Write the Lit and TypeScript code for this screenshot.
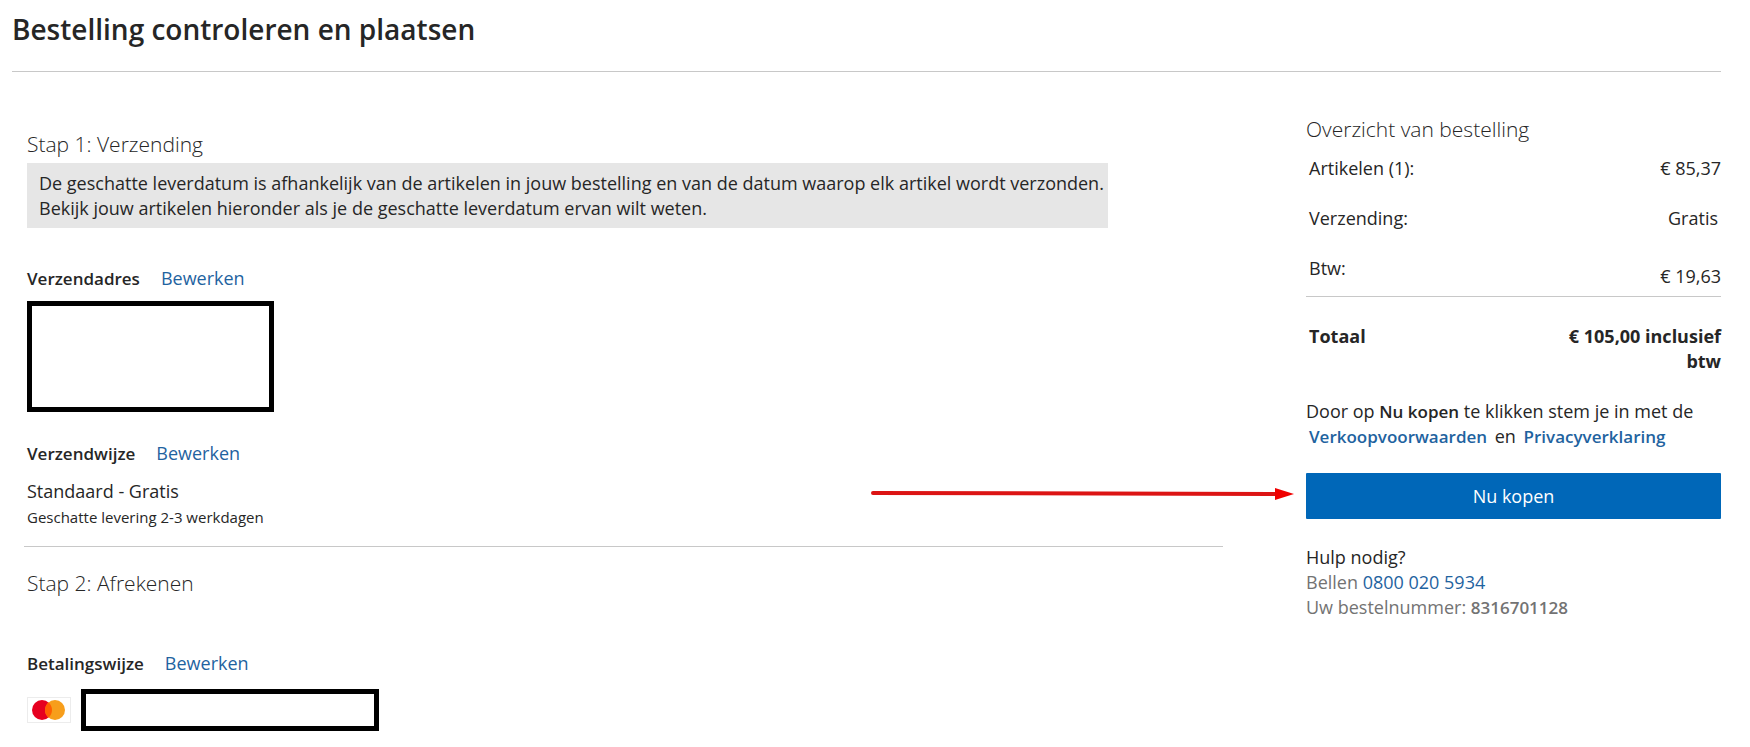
import { LitElement, html, css } from "lit";
import { customElement } from "lit/decorators.js";

@customElement("app-root")
export class AppRoot extends LitElement {
  static styles = css`
    :host {
      display: block;
      box-sizing: border-box;
      padding: 11px 29px 12px 12px;
      background: #fff;
      color: #262626;
      font-family: "Open Sans", "Noto Sans", sans-serif;
      font-size: 18px;
      line-height: 25px;
    }
    *,
    *::before,
    *::after {
      box-sizing: border-box;
    }
    h1,
    h2,
    h3,
    p,
    dl,
    dd {
      margin: 0;
    }
    a {
      color: #1f639f;
      text-decoration: none;
    }
    .title {
      padding-bottom: 24px;
      border-bottom: 1px solid #c8c8c8;
      font-size: 28px;
      line-height: 36px;
      font-weight: 600;
    }
    .layout {
      display: grid;
      grid-template-columns: minmax(0, 1fr) 415px;
      column-gap: 83px;
      padding-left: 12px;
    }
    .step {
      padding: 0 3px;
    }
    .shipping {
      padding-top: 57px;
      padding-bottom: 16px;
    }
    .rule {
      height: 1px;
      margin: 0;
      border: 0;
      background: #c8c8c8;
    }
    .heading {
      font-size: 21px;
      line-height: 30px;
      font-weight: 300;
    }
    .note {
      width: fit-content;
      margin-top: 4px;
      padding: 8px 4px 7px 12px;
      background: #e6e6e6;
    }
    .label-row {
      display: flex;
      align-items: baseline;
      gap: 21px;
    }
    .label {
      font-size: 17px;
      line-height: 25px;
      font-weight: 600;
    }
    .address {
      padding-top: 38px;
    }
    .method {
      padding-top: 29px;
    }
    .redacted {
      border: 5px solid #000;
      background: #fff;
    }
    .address-box {
      width: 247px;
      height: 111px;
      margin-top: 10px;
    }
    .method-name {
      padding-top: 13px;
    }
    .estimate {
      padding-top: 1px;
      font-size: 15px;
    }
    .payment {
      padding-top: 21px;
    }
    .payment-method {
      padding-top: 53px;
    }
    .card-row {
      display: flex;
      align-items: center;
      gap: 10px;
      padding-top: 13px;
    }
    .card-logo {
      display: block;
      width: 44px;
      height: 26px;
    }
    .card-box {
      width: 298px;
      height: 42px;
    }
    .summary {
      padding-top: 42px;
    }
    .line {
      display: flex;
      justify-content: space-between;
      gap: 16px;
      padding: 12px 0 13px 3px;
    }
    .line dd {
      text-align: right;
    }
    .line .free {
      padding-right: 3px;
    }
    .line.tax {
      padding-bottom: 0;
    }
    .tax dd {
      padding: 8px 0 7px;
    }
    .line.total {
      padding: 27px 0 0 3px;
      border-top: 1px solid #c8c8c8;
      font-weight: 700;
    }
    .total dd {
      max-width: 170px;
    }
    .terms {
      padding-top: 25px;
    }
    .terms strong,
    .terms a,
    .order-number {
      font-size: 17px;
      font-weight: 600;
    }
    .terms a {
      margin: 0 3px;
    }
    .buy-row {
      position: relative;
      margin-top: 24px;
    }
    .buy {
      display: block;
      width: 100%;
      padding: 11px 12px 10px;
      border: 0;
      border-radius: 1px;
      background: #0067b8;
      color: #fff;
      font: inherit;
      cursor: pointer;
    }
    .arrow {
      position: absolute;
      right: calc(100% + 11px);
      top: 14px;
      width: 424px;
      height: 14px;
      pointer-events: none;
    }
    .help {
      padding-top: 26px;
    }
    .muted {
      color: #737373;
    }
  `;

  render() {
    return html`
      <main>
        <h1 class="title">Bestelling controleren en plaatsen</h1>
        <div class="layout">
          <div>
            <section class="step shipping">
              <h2 class="heading">Stap 1: Verzending</h2>
              <p class="note">
                De geschatte leverdatum is afhankelijk van de artikelen in jouw bestelling en van de datum waarop elk artikel wordt verzonden.<br />
                Bekijk jouw artikelen hieronder als je de geschatte leverdatum ervan wilt weten.
              </p>
              <div class="address">
                <div class="label-row">
                  <h3 class="label">Verzendadres</h3>
                  <a href="#verzendadres">Bewerken</a>
                </div>
                <div class="redacted address-box"></div>
              </div>
              <div class="method">
                <div class="label-row">
                  <h3 class="label">Verzendwijze</h3>
                  <a href="#verzendwijze">Bewerken</a>
                </div>
                <p class="method-name">Standaard - Gratis</p>
                <p class="estimate">Geschatte levering 2-3 werkdagen</p>
              </div>
            </section>
            <hr class="rule" />
            <section class="step payment">
              <h2 class="heading">Stap 2: Afrekenen</h2>
              <div class="payment-method">
                <div class="label-row">
                  <h3 class="label">Betalingswijze</h3>
                  <a href="#betalingswijze">Bewerken</a>
                </div>
                <div class="card-row">
                  <svg class="card-logo" viewBox="0 0 44 26" aria-hidden="true">
                    <rect x="0.5" y="0.5" width="43" height="25" fill="#fff" stroke="#ececec" />
                    <circle cx="15" cy="13" r="10" fill="#e6001f" />
                    <circle cx="28" cy="13" r="10" fill="#f79e1b" />
                    <path d="M21.5 5.4a10 10 0 0 1 0 15.2a10 10 0 0 1 0-15.2z" fill="#ff5f00" />
                  </svg>
                  <div class="redacted card-box"></div>
                </div>
              </div>
            </section>
          </div>

          <aside class="summary">
            <h2 class="heading">Overzicht van bestelling</h2>
            <dl>
              <div class="line">
                <dt>Artikelen (1):</dt>
                <dd>€ 85,37</dd>
              </div>
              <div class="line">
                <dt>Verzending:</dt>
                <dd class="free">Gratis</dd>
              </div>
              <div class="line tax">
                <dt>Btw:</dt>
                <dd>€ 19,63</dd>
              </div>
              <div class="line total">
                <dt>Totaal</dt>
                <dd>€ 105,00 inclusief btw</dd>
              </div>
            </dl>
            <p class="terms">
              Door op <strong>Nu kopen</strong> te klikken stem je in met de
              <a href="#verkoopvoorwaarden">Verkoopvoorwaarden</a> en
              <a href="#privacyverklaring">Privacyverklaring</a>
            </p>
            <div class="buy-row">
              <svg class="arrow" viewBox="0 0 424 14" aria-hidden="true">
                <path d="M2 6L406 7" stroke="#dc1414" stroke-width="4" stroke-linecap="round" />
                <path d="M404 1L423 7L404 13z" fill="#f00000" />
              </svg>
              <button class="buy" type="button">Nu kopen</button>
            </div>
            <div class="help">
              <p>Hulp nodig?</p>
              <p class="muted">Bellen <a href="tel:08000205934">0800 020 5934</a></p>
              <p class="muted">
                Uw bestelnummer: <span class="order-number">8316701128</span>
              </p>
            </div>
          </aside>
        </div>
      </main>
    `;
  }
}
